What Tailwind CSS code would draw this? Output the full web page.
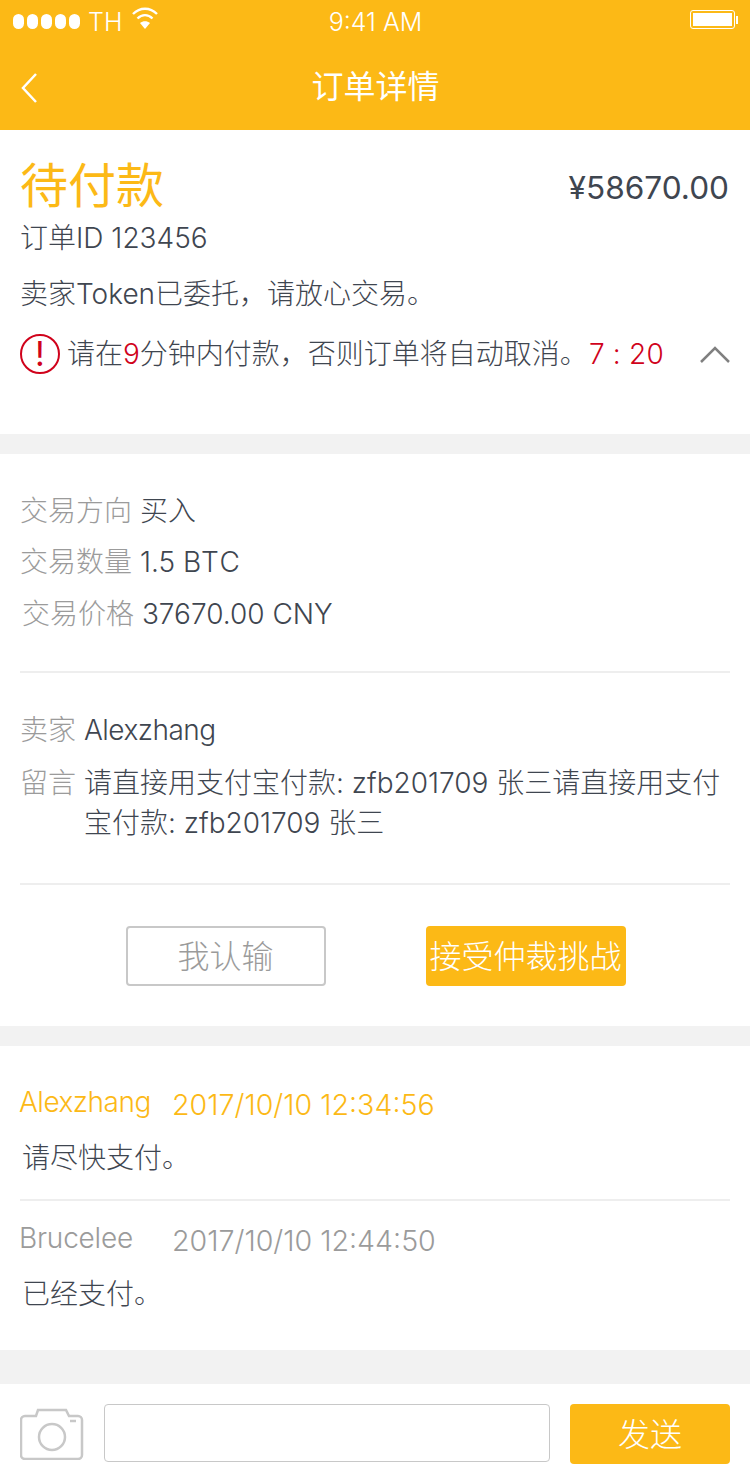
<!DOCTYPE html>
<html lang="zh-CN">
<head>
    <meta charset="UTF-8">
    <meta name="viewport" content="width=device-width, initial-scale=1.0">
    <title>订单详情</title>
    <script src="https://cdn.jsdelivr.net/npm/@tailwindcss/browser@4"></script>
</head>
<body class="w-[750px] h-[1482px] overflow-hidden bg-[#f2f2f2] font-['Inter','Noto_Sans_CJK_SC',sans-serif] text-[28px] leading-[40px] font-light text-[#3f4650]">
    <!-- 状态栏 + 导航 -->
    <header class="h-[130px] bg-[#fcb916] text-white">
        <div class="h-[42px] relative flex items-center pl-[13px] pr-[13px]">
            <div class="flex gap-[3px]">
                <span class="w-[11px] h-[15px] rounded-full bg-white"></span>
                <span class="w-[11px] h-[15px] rounded-full bg-white"></span>
                <span class="w-[11px] h-[15px] rounded-full bg-white"></span>
                <span class="w-[11px] h-[15px] rounded-full bg-white"></span>
                <span class="w-[11px] h-[15px] rounded-full bg-white"></span>
            </div>
            <span class="ml-[8px] text-[25px] leading-[30px] mt-[2px]">TH</span>
            <svg class="ml-[9px] -mt-[7px]" width="28" height="26" viewBox="0 0 28 26" fill="none" stroke="white" stroke-width="2.4">
                <path d="M2 9c7-7 17-7 24 0"/>
                <path d="M6.500 13.500c4.500-4.500 10.500-4.500 15 0"/>
                <path d="M14 24l-5-6c3-2.500 7-2.500 10 0z" fill="white" stroke="none"/>
            </svg>
            <span class="absolute left-0 right-0 top-[7px] text-center text-[25px] leading-[30px] pl-[1px]">9:41 AM</span>
            <div class="ml-auto flex items-center -mt-[3px] -mr-[1px]">
                <div class="w-[45px] h-[19px] border border-white rounded-[3px] p-[2px]">
                    <div class="w-full h-full bg-white"></div>
                </div>
                <div class="w-[2px] h-[8px] bg-white ml-[1px]"></div>
            </div>
        </div>
        <div class="h-[88px] relative flex items-center justify-center">
            <svg class="absolute left-[20px] top-[30px]" width="18" height="32" viewBox="0 0 18 32" fill="none" stroke="white" stroke-width="2.500">
                <path d="M16 2L3 16l13 14"/>
            </svg>
            <h1 class="text-[32px] leading-[40px] font-normal ml-[1px] mt-[2px]">订单详情</h1>
        </div>
    </header>

    <!-- 订单状态 -->
    <section class="h-[304px] bg-white px-[20px] relative">
        <div class="flex justify-between items-start pt-[26px]">
            <h2 class="text-[48px] leading-[60px] font-normal text-[#fcb916]">待付款</h2>
            <span class="text-[31.6px] leading-[44px] mt-[10px] font-normal pr-[1px]">¥58670.00</span>
        </div>
        <p class="mt-[2px]">订单ID 123456</p>
        <p class="mt-[16px]">卖家Token已委托，请放心交易。</p>
        <div class="flex items-center mt-[20px]">
            <span class="w-[40px] h-[40px] rounded-full border-2 border-[#d0021b] text-[#d0021b] flex items-center justify-center text-[34px] font-normal">!</span>
            <p class="ml-[7px]">请在<span class="text-[#d0021b]">9</span>分钟内付款，否则订单将自动取消。<span class="text-[#d0021b] ml-[1px] tracking-[0.2px]">7 : 20</span></p>
            <svg class="ml-auto mr-[-1px]" width="32" height="18" viewBox="0 0 32 18" fill="none" stroke="#808080" stroke-width="2.500">
                <path d="M2 17L16 3l14 14"/>
            </svg>
        </div>
    </section>

    <!-- 交易信息 -->
    <section class="h-[572px] mt-[20px] bg-white px-[20px]">
        <div class="pt-[37px] pb-[37px] border-b-2 border-[#eeeeee]">
            <p class="mb-[11px]"><span class="text-[#9b9b9b]">交易方向</span> 买入</p>
            <p class="mb-[12px]"><span class="text-[#9b9b9b]">交易数量</span> 1.5 <span class="tracking-[1.5px]">BTC</span></p>
            <p class="pl-[2px]"><span class="text-[#9b9b9b]">交易价格</span> 37670.00 CNY</p>
        </div>
        <div class="pt-[37px] pb-[40px] border-b-2 border-[#eeeeee]">
            <p class="mb-[13px]"><span class="text-[#9b9b9b]">卖家</span> <span class="tracking-[-0.5px]">Alexzhang</span></p>
            <div class="flex">
                <span class="text-[#9b9b9b] shrink-0">留言</span>
                <p class="ml-[8px]">请直接用支付宝付款: zfb201709 张三请直接用支付宝付款: zfb201709 张三</p>
            </div>
        </div>
        <div class="flex justify-center gap-[100px] pt-[41px] pl-[1px]">
            <button class="w-[200px] h-[60px] border-2 border-[#c8c8c8] rounded-[4px] text-[32px] text-[#9b9b9b] pt-[2px]">我认输</button>
            <button class="w-[200px] h-[60px] bg-[#fcb916] rounded-[4px] text-[32px] text-white pt-[2px]">接受仲裁挑战</button>
        </div>
    </section>

    <!-- 留言列表 -->
    <section class="h-[304px] mt-[20px] bg-white px-[20px]">
        <div class="pt-[36px] pb-[21px] border-b-2 border-[#eeeeee]">
            <div class="flex text-[#fcb916]">
                <span class="w-[152px] -ml-[1px] mr-[1px] tracking-[-0.5px]">Alexzhang</span>
                <span class="mt-[3px] text-[28.6px]">2017/10/10 12:34:56</span>
            </div>
            <p class="mt-[13px] pl-[2px]">请尽快支付。</p>
        </div>
        <div class="pt-[17px]">
            <div class="flex text-[#9b9b9b]">
                <span class="w-[152px] -ml-[1px] mr-[1px] tracking-[-0.2px]">Brucelee</span>
                <span class="mt-[3px] text-[28.6px]">2017/10/10 12:44:50</span>
            </div>
            <p class="mt-[13px] pl-[2px]">已经支付。</p>
        </div>
    </section>

    <!-- 输入栏 -->
    <footer class="h-[98px] mt-[34px] bg-white flex items-start px-[20px] pt-[20px]">
        <svg class="mt-[4px] shrink-0" width="64" height="52" viewBox="0 0 64 52" fill="none" stroke="#c8c8c8" stroke-width="2.500">
            <path d="M5 8h11l2-6h28l3 6h9a4 4 0 0 1 4 4v35a4 4 0 0 1-4 4H5a4 4 0 0 1-4-4V12a4 4 0 0 1 4-4z"/>
            <circle cx="32" cy="29" r="13"/>
            <path d="M50 13h6"/>
        </svg>
        <input class="ml-[20px] w-[446px] h-[58px] border border-[#c8c8c8] rounded-[4px]" type="text">
        <button class="ml-[20px] w-[160px] h-[60px] bg-[#fcb916] rounded-[4px] text-[32px] text-white pt-[2px]">发送</button>
    </footer>
</body>
</html>
